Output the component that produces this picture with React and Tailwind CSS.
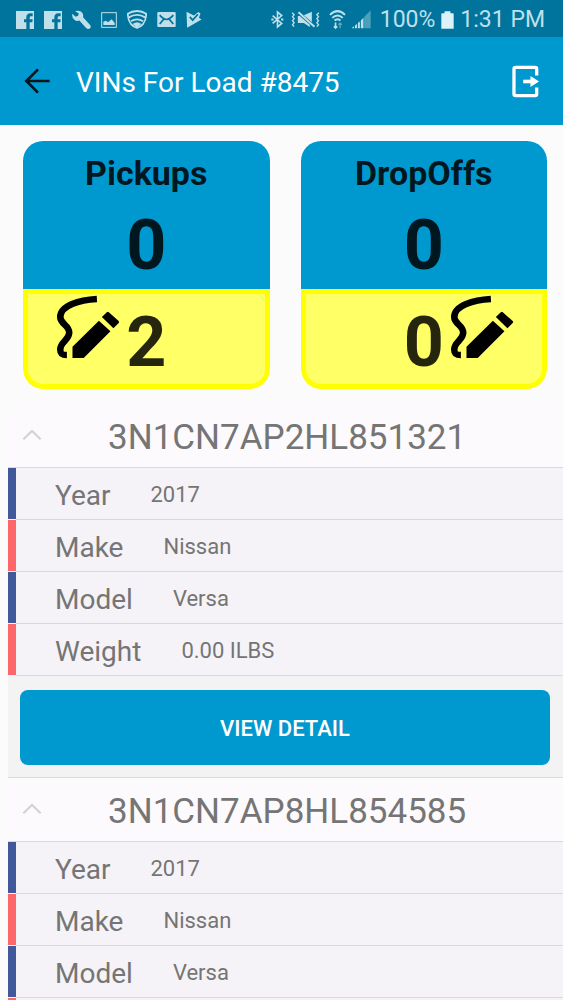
import { useState } from "react";

function FacebookIcon() {
  return (
    <svg viewBox="0 0 54 54" className="size-[18px]" fill="currentColor" aria-hidden="true">
      <path d="M0 0H54V54H41V34H49L50 25H41V20Q41 16 45 16H50V7H43Q31 8 31 19V25H24V34H31V54H0Z" />
    </svg>
  );
}

function WrenchIcon() {
  return (
    <svg viewBox="0 0 62 62" className="h-5 w-[19px]" fill="currentColor" aria-hidden="true">
      <path d="M10 2Q26 -3 34 8Q38 15 36 22L59 47Q64 54 58 59Q52 63 46 57L24 33Q14 36 7 29Q-1 22 1 11L12 20L20 17L22 10Z" />
    </svg>
  );
}

function PictureIcon() {
  return (
    <svg viewBox="0 0 48 48" className="size-4" aria-hidden="true">
      <rect x="2" y="2" width="44" height="44" fill="none" stroke="currentColor" strokeWidth="3" />
      <path d="M7 39V29L15 26L21 31L32 22L41 33V39Z" fill="currentColor" />
    </svg>
  );
}

function ShieldWifiIcon() {
  return (
    <svg viewBox="0 0 66 62" className="h-[21px] w-5" fill="none" stroke="currentColor" strokeWidth="6" aria-hidden="true">
      <path d="M33 3Q50 3 63 12Q64 32 52 47Q44 56 33 59Q22 56 14 47Q2 32 3 12Q16 3 33 3Z" />
      <path d="M6 24Q33 8 60 24M13 37Q33 24 53 37" />
      <path d="M19 46Q33 36 47 46L33 58Z" fill="currentColor" strokeWidth="1" />
    </svg>
  );
}

function MailIcon() {
  return (
    <svg viewBox="0 0 54 44" className="h-[15px] w-[19px]" aria-hidden="true">
      <rect width="54" height="44" rx="3" fill="currentColor" />
      <path d="M7 9Q18 21 27 22Q36 21 47 9M7 35L19 21M47 35L35 21" fill="none" stroke="#00749c" strokeWidth="5" />
    </svg>
  );
}

function PlayCheckIcon() {
  return (
    <svg viewBox="0 0 48 52" className="h-[17px] w-4" aria-hidden="true">
      <path d="M1 2L24 14L37 3L44 8L39 21L47 26L3 51Z" fill="currentColor" />
      <path d="M11 18L20 28L36 10" fill="none" stroke="#00749c" strokeWidth="5" />
    </svg>
  );
}

function BluetoothIcon() {
  return (
    <svg viewBox="0 0 40 56" className="h-[19px] w-[13px]" fill="none" stroke="currentColor" strokeWidth="5" aria-hidden="true">
      <path d="M5 16L33 40L20 51V5L33 16L5 40" />
      <path d="M1 28H8M31 28H38" strokeWidth="6" />
    </svg>
  );
}

function VibrateMuteIcon() {
  return (
    <svg viewBox="0 0 86 54" className="h-[18px] w-[29px]" aria-hidden="true">
      <path d="M3 5L9 11L4 17L9 23L4 29L9 35L4 41L9 47M83 5L77 11L82 17L77 23L82 29L77 35L82 41L77 47" fill="none" stroke="currentColor" strokeWidth="4" />
      <path d="M20 15H26L56 41V48L38 36H20ZM38 13L62 2V33Z" fill="currentColor" />
      <path d="M22 4L70 47" stroke="currentColor" strokeWidth="6" />
    </svg>
  );
}

function WifiIcon() {
  return (
    <svg viewBox="0 0 52 58" className="h-[19px] w-[17px]" fill="none" stroke="currentColor" strokeWidth="6" aria-hidden="true">
      <path d="M3 15Q26 -8 49 15M10 24Q26 9 42 24M17 32Q26 24 35 32" />
      <path d="M20 38V55M15 50L20 55L25 50" strokeWidth="5" />
      <path d="M34 56V40M29 45L34 40L39 45" strokeWidth="4" opacity="0.5" />
    </svg>
  );
}

function SignalIcon() {
  return (
    <svg viewBox="0 0 58 56" className="h-[19px] w-[19px]" fill="currentColor" aria-hidden="true">
      <path d="M37 20L57 0V55H37Z" opacity="0.4" />
      <path d="M1 55V52L6 49V55ZM9 55V46L15 42V55ZM18 55V39L24 34V55ZM27 55V31L35 23V55Z" />
    </svg>
  );
}

function BatteryIcon() {
  return (
    <svg viewBox="0 0 40 54" className="h-[18px] w-[13px]" fill="#dcf1f8" aria-hidden="true">
      <path d="M11 0H29V6H37Q39 6 39 8V54H1V8Q1 6 3 6H11Z" />
    </svg>
  );
}

function SignatureIcon() {
  return (
    <svg viewBox="0 0 200 200" className="size-[66px]" aria-hidden="true">
      <path d="M127 15C75 18 16 35 16 70C16 92 43 94 43 117C43 140 16 145 16 168C16 182 21 185 36 185" fill="none" stroke="#000" strokeWidth="20" />
      <path d="M133 81L168 113L87 194H53V160ZM142 70L157 55Q160 52 163 55L193 82Q196 85 193 88L177 104Z" fill="#000" />
    </svg>
  );
}

function StatusBar() {
  return (
    <div className="flex h-[37px] shrink-0 items-center justify-between bg-[#00749c] pt-[2px] pr-[18px] pl-4 text-[#bfe0eb]">
      <div className="flex items-center gap-[10px]">
        <FacebookIcon />
        <FacebookIcon />
        <WrenchIcon />
        <PictureIcon />
        <ShieldWifiIcon />
        <MailIcon />
        <PlayCheckIcon />
      </div>
      <div className="flex items-center gap-[9px] text-[23px]">
        <div className="flex items-center gap-[7px]">
          <BluetoothIcon />
          <VibrateMuteIcon />
        </div>
        <div className="flex items-center gap-[6px]">
          <WifiIcon />
          <SignalIcon />
        </div>
        <div className="flex items-center gap-[6px]">
          <span className="pt-[2px]">100%</span>
          <BatteryIcon />
          <span className="pt-[2px]">1:31 PM</span>
        </div>
      </div>
    </div>
  );
}

function AppBar() {
  return (
    <header className="flex h-[88px] shrink-0 items-center bg-[#0099cf] pr-6 pl-6 text-white">
      <button type="button" aria-label="Back" className="text-[#06141c]">
        <svg viewBox="0 0 78 78" className="size-[26px]" fill="none" stroke="currentColor" strokeWidth="8" aria-hidden="true">
          <path d="M77 39H9M42 4L7 39L42 74" />
        </svg>
      </button>
      <h1 className="ml-[26px] flex-1 pt-1 text-[28px]">VINs For Load #8475</h1>
      <button type="button" aria-label="Exit">
        <svg viewBox="0 0 82 98" className="h-[33px] w-[27px]" fill="none" stroke="currentColor" aria-hidden="true">
          <path d="M75 31V11Q75 6 70 6H11Q6 6 6 11V87Q6 92 11 92H70Q75 92 75 87V67" strokeWidth="10" />
          <path d="M34 49H58" strokeWidth="11" />
          <path d="M56 32L82 49L56 66Z" fill="currentColor" stroke="none" />
        </svg>
      </button>
    </header>
  );
}

function CountCard({ title, count, signed, iconSide }) {
  return (
    <section className="overflow-hidden rounded-[20px] text-center font-bold text-black/85">
      <div className="h-[148px] bg-[#0099cf] pt-3">
        <h2 className="text-[34px] leading-10">{title}</h2>
        <p className="mt-4 text-[70px] leading-[72px]">{count}</p>
      </div>
      <div className="grid h-[100px] grid-cols-[1fr_auto_1fr] gap-[5px] rounded-b-[20px] border-[5px] border-[#ffff00] bg-[#ffff66]">
        <div className="flex justify-end">{iconSide === "left" && <SignatureIcon />}</div>
        <p className="pt-3 text-[70px] leading-[72px]">{signed}</p>
        <div>{iconSide === "right" && <SignatureIcon />}</div>
      </div>
    </section>
  );
}

function VehicleItem({ vehicle }) {
  const [open, setOpen] = useState(true);
  const rows = [
    ["Year", vehicle.year],
    ["Make", vehicle.make],
    ["Model", vehicle.model],
    ["Weight", vehicle.weight],
  ];
  return (
    <section className="text-[#757575]">
      <button
        type="button"
        aria-expanded={open}
        onClick={() => setOpen(!open)}
        className="flex h-[63px] w-full items-center bg-[#fcfafc] pt-[6px] pl-[14px] text-left text-[35px]"
      >
        <svg viewBox="0 0 60 36" className="mb-2 h-3 w-5 text-[#d2d2d2]" fill="none" stroke="currentColor" strokeWidth="6" aria-hidden="true">
          <path d={open ? "M4 31L30 6L56 31" : "M4 6L30 31L56 6"} />
        </svg>
        <span className="ml-[66px]">{vehicle.vin}</span>
      </button>
      {open && (
        <>
          <dl className="border-t border-[#d9d9db]">
            {rows.map(([label, value]) => (
              <div key={label} className="group flex h-[52px] bg-[#f5f3f7]">
                <span className="mb-px w-2 bg-[#41599b] group-even:bg-[#ff6669]" />
                <div className="flex flex-1 items-center gap-10 border-b border-[#d9d9db] pt-[2px] pl-[39px]">
                  <dt className="pt-[2px] text-[28px]">{label}</dt>
                  <dd className="text-[22px]">{value}</dd>
                </div>
              </div>
            ))}
          </dl>
          <div className="h-[102px] border-b border-[#dcdcdc] bg-[#f3f3f3] pt-[14px] pr-[13px] pl-3">
            <button type="button" className="h-[75px] w-full rounded-lg bg-[#0099cf] pt-[2px] text-[22px] font-medium text-white">
              VIEW DETAIL
            </button>
          </div>
        </>
      )}
    </section>
  );
}

const vehicles = [
  { vin: "3N1CN7AP2HL851321", year: "2017", make: "Nissan", model: "Versa", weight: "0.00 ILBS" },
  { vin: "3N1CN7AP8HL854585", year: "2017", make: "Nissan", model: "Versa", weight: "0.00 ILBS" },
];

export default function App() {
  return (
    <div className="flex h-dvh flex-col bg-[#fbfbfb] font-[Roboto,sans-serif]">
      <StatusBar />
      <AppBar />
      <main className="min-h-0 flex-1 overflow-y-auto [scrollbar-width:none]">
        <div className="grid grid-cols-2 gap-[31px] pt-4 pr-4 pl-[23px]">
          <CountCard title="Pickups" count={0} signed={2} iconSide="left" />
          <CountCard title="DropOffs" count={0} signed={0} iconSide="right" />
        </div>
        <div className="mt-[15px] ml-2">
          {vehicles.map((vehicle) => (
            <VehicleItem key={vehicle.vin} vehicle={vehicle} />
          ))}
        </div>
      </main>
    </div>
  );
}
